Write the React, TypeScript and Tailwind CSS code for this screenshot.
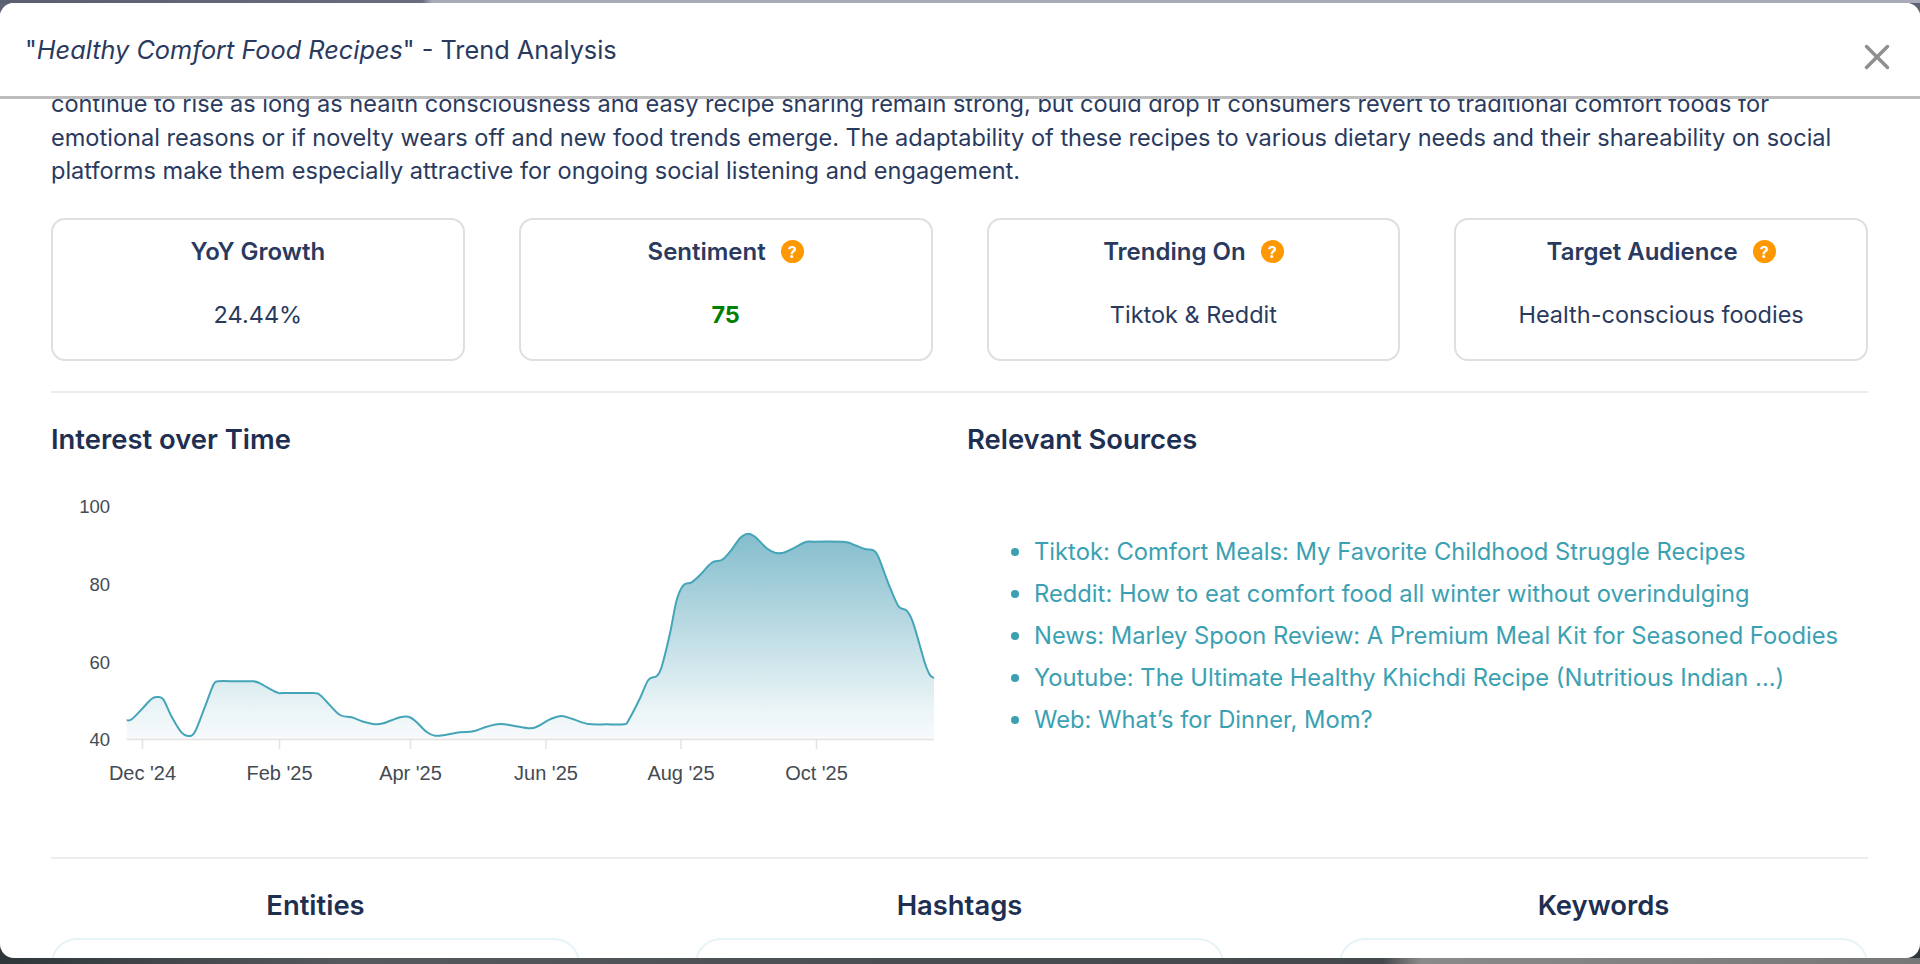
import { X } from "lucide-react";

const STATS = [
  { title: "YoY Growth", value: "24.44%", help: false, green: false },
  { title: "Sentiment", value: "75", help: true, green: true },
  { title: "Trending On", value: "Tiktok & Reddit", help: true, green: false },
  { title: "Target Audience", value: "Health-conscious foodies", help: true, green: false },
];

const SOURCES = [
  "Tiktok: Comfort Meals: My Favorite Childhood Struggle Recipes",
  "Reddit: How to eat comfort food all winter without overindulging",
  "News: Marley Spoon Review: A Premium Meal Kit for Seasoned Foodies",
  "Youtube: The Ultimate Healthy Khichdi Recipe (Nutritious Indian ...)",
  "Web: What’s for Dinner, Mom?",
];

// traced from the reference, page coordinates
const LEFT: [number, number][] = [
  [230, 721], [245, 718], [275, 688], [305, 656], [322, 651], [340, 658], [365, 710], [395, 758], [417, 768],
  [435, 755], [465, 680], [490, 615], [505, 604], [560, 604], [610, 604], [630, 610], [680, 637], [700, 639],
  [790, 639], [810, 645], [830, 665], [870, 705], [905, 712], [940, 725], [975, 733], [1000, 730], [1050, 712],
  [1075, 710], [1095, 722], [1130, 756], [1155, 767], [1185, 765], [1230, 757], [1270, 754], [1310, 740],
];
const RIGHT: [number, number][] = [
  [60, 732], [100, 737], [150, 745], [175, 738], [210, 718], [245, 708], [280, 718], [325, 732], [380, 733],
  [432, 733], [445, 722], [480, 655], [505, 600], [530, 588], [545, 560], [570, 460], [590, 360], [610, 316],
  [635, 307], [660, 285], [695, 248], [725, 240], [750, 215], [780, 175], [803, 161], [825, 170], [860, 205],
  [885, 218], [910, 218], [940, 205], [975, 187], [1000, 185], [1095, 186], [1125, 196], [1155, 207], [1180, 211],
  [1195, 230], [1225, 310], [1255, 378], [1280, 392], [1300, 430], [1335, 550], [1350, 585], [1362, 594],
];
const POINTS = [
  ...LEFT.map(([x, y]) => [50 + x / 3, 480 + y / 3]),
  ...RIGHT.map(([x, y]) => [480 + x / 3, 480 + y / 3]),
];

function smoothLine(pts: number[][]) {
  let d = `M${pts[0][0]} ${pts[0][1]}`;
  for (let i = 0; i < pts.length - 1; i++) {
    const p0 = pts[Math.max(i - 1, 0)];
    const p1 = pts[i];
    const p2 = pts[i + 1];
    const p3 = pts[Math.min(i + 2, pts.length - 1)];
    const c1x = p1[0] + (p2[0] - p0[0]) / 6;
    const c1y = p1[1] + (p2[1] - p0[1]) / 6;
    const c2x = p2[0] - (p3[0] - p1[0]) / 6;
    const c2y = p2[1] - (p3[1] - p1[1]) / 6;
    d += ` C${c1x.toFixed(1)} ${c1y.toFixed(1)} ${c2x.toFixed(1)} ${c2y.toFixed(1)} ${p2[0].toFixed(1)} ${p2[1].toFixed(1)}`;
  }
  return d;
}

function InterestChart() {
  const line = smoothLine(POINTS);
  const yLabels = [
    { label: "100", y: 507 },
    { label: "80", y: 585 },
    { label: "60", y: 663 },
    { label: "40", y: 740 },
  ];
  const xLabels = [
    { label: "Dec '24", x: 142.5 },
    { label: "Feb '25", x: 279.5 },
    { label: "Apr '25", x: 410.5 },
    { label: "Jun '25", x: 546 },
    { label: "Aug '25", x: 681 },
    { label: "Oct '25", x: 816.5 },
  ];
  return (
    <svg viewBox="51 480 900 320" className="mt-[24px] block h-[320px] w-[900px]">
      <defs>
        <linearGradient id="area" gradientUnits="userSpaceOnUse" x1="0" y1="534" x2="0" y2="739">
          <stop offset="0" stopColor="#84bdcd" />
          <stop offset="0.85" stopColor="#eaf4f6" />
          <stop offset="1" stopColor="#f8fafc" />
        </linearGradient>
      </defs>
      <path d={`${line} L934 739 L126.7 739 Z`} fill="url(#area)" />
      <path d={line} fill="none" stroke="#45a5b8" strokeWidth="2" />
      <line x1="126.7" x2="934" y1="739.5" y2="739.5" stroke="#e3e3e3" strokeWidth="1.5" />
      {xLabels.map((t) => (
        <g key={t.label}>
          <line x1={t.x} x2={t.x} y1="740" y2="749" stroke="#e3e3e3" strokeWidth="1.5" />
          <text x={t.x} y="780" textAnchor="middle" fontSize="20" fill="#444b52" fontFamily="'Liberation Sans', sans-serif">
            {t.label}
          </text>
        </g>
      ))}
      {yLabels.map((t) => (
        <text key={t.label} x="110" y={t.y + 5.5} textAnchor="end" fontSize="18.5" fill="#444b52" fontFamily="'Liberation Sans', sans-serif">
          {t.label}
        </text>
      ))}
    </svg>
  );
}

function App() {
  return (
    <div className="flex h-screen flex-col overflow-hidden bg-[linear-gradient(to_bottom,#5f6272_50%,#2f363a_50%)] font-['Inter',sans-serif] text-[#2a3a5e]">
      <div className="h-[3px] shrink-0 bg-[linear-gradient(to_right,#5b5e70,#6a6d80_22%,#a9abb8_22.5%,#a9abb8)]" />

      <div className="flex min-h-0 flex-1 flex-col overflow-hidden rounded-[14px] bg-white">
        {/* --- HEADER --- */}
        <header className="relative z-10 flex h-[96px] shrink-0 items-start justify-between border-b-[3px] border-[#bdbdbd] bg-white pl-[25px] pr-[30px]">
          <h2 className="mt-[29px] text-[25.3px] leading-[36px]">
            "<em>Healthy Comfort Food Recipes</em>" - Trend Analysis
          </h2>
          <X size={42} strokeWidth={2} className="mt-[33px] -mr-[8px] text-[#8f8f8f]" />
        </header>

        {/* --- BODY (scrolled a little) --- */}
        <div className="min-h-0 flex-1 overflow-hidden pl-[51px] pr-[52px]">
          <p className="-mt-[12px] text-[23.55px] leading-[33.6px]">
            continue to rise as long as health consciousness and easy recipe sharing remain strong, but could drop if consumers revert to traditional comfort foods for emotional reasons or if novelty wears off and new food trends emerge. The adaptability of these recipes to various dietary needs and their shareability on social platforms make them especially attractive for ongoing social listening and engagement.
          </p>

          <div className="mt-[30px] grid grid-cols-4 gap-[54px]">
            {STATS.map((s) => (
              <div key={s.title} className="flex h-[143px] flex-col items-center rounded-[14px] border-2 border-[#dedfe1] pt-[14px]">
                <div className="flex items-center gap-[15px]">
                  <span className="text-[24px] font-semibold leading-[36px]">{s.title}</span>
                  {s.help && (
                    <span className="flex h-[23px] w-[23px] items-center justify-center rounded-full bg-[#ff9800] text-[16px] font-bold text-white">
                      ?
                    </span>
                  )}
                </div>
                <div className={`mt-[28px] text-[23.5px] leading-[34px] ${s.green ? "font-bold text-[#008000]" : ""}`}>
                  {s.value}
                </div>
              </div>
            ))}
          </div>

          <div className="mt-[30px] h-[2px] bg-[#ebecf0]" />

          <div className="mt-[29px] grid grid-cols-2 gap-[15px]">
            <div>
              <h3 className="text-[27.4px] font-semibold leading-[34px] text-[#1e2f52]">Interest over Time</h3>
              <InterestChart />
            </div>
            <div>
              <h3 className="text-[27.4px] font-semibold leading-[34px] text-[#1e2f52]">Relevant Sources</h3>
              <ul className="mt-[75px] flex flex-col pl-[67px] text-[23.75px] leading-[42px] text-[#3ba1b2]">
                {SOURCES.map((s) => (
                  <li key={s} className="relative whitespace-nowrap">
                    <span className="absolute -left-[23px] top-[17px] h-[8px] w-[8px] rounded-full bg-[#3ba1b2]" />
                    {s}
                  </li>
                ))}
              </ul>
            </div>
          </div>

          <div className="mt-[57px] h-[2px] bg-[#ebecf0]" />

          <div className="mt-[29px] grid grid-cols-3 gap-[115px]">
            {["Entities", "Hashtags", "Keywords"].map((t) => (
              <div key={t}>
                <h3 className="text-center text-[27.4px] font-semibold leading-[34px] text-[#1e2f52]">{t}</h3>
                <div className="mt-[16px] h-[120px] rounded-[26px] border-2 border-[#e6f3f7]" />
              </div>
            ))}
          </div>
        </div>
      </div>

      <div className="h-[6px] shrink-0 bg-[linear-gradient(to_right,#2f363a,#565a5c_18%,#484d50_50%,#44494c_72%,#8a8a8a_74%,#777777)]" />
    </div>
  );
}

export default App;
